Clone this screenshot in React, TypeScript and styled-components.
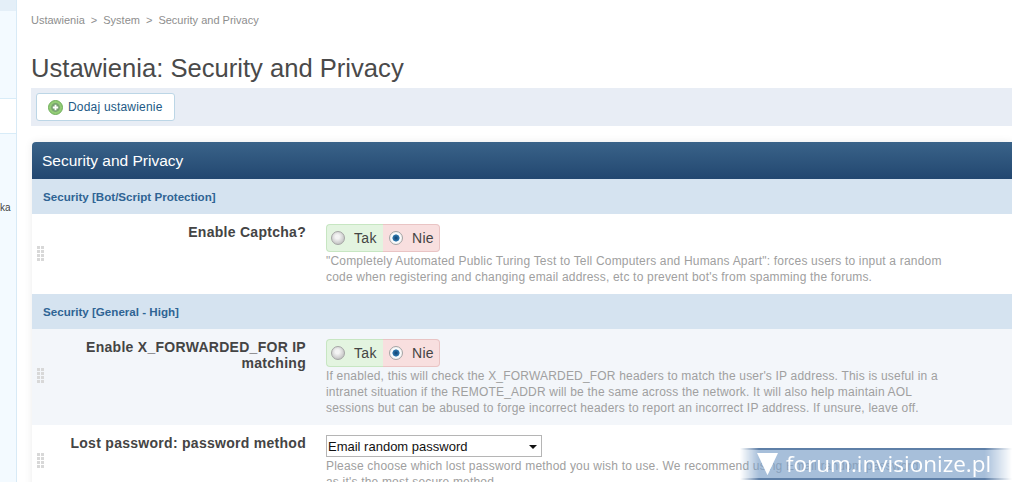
import styled, { createGlobalStyle } from "styled-components";

const GlobalStyle = createGlobalStyle`
    html, body {
        margin: 0;
        padding: 0;
        height: 482px;
        overflow: hidden;
        background: #fff;
        font-family: "Liberation Sans", Arial, sans-serif;
    }
`;

const Page = styled.div`
    display: flex;
    width: 1012px;
    height: 482px;
    overflow: hidden;
`;

const Sidebar = styled.aside`
    flex: none;
    width: 17px;
    height: 482px;
    box-sizing: border-box;
    border-right: 1px solid #d8eaf6;
    background: #f3faff;
    display: flex;
    flex-direction: column;
`;

const SideTop = styled.div`
    height: 11px;
    background: #e4eff8;
`;

const SideItem = styled.div<{ $height: number; $top: number }>`
    height: ${(p) => p.$height}px;
    margin-top: ${(p) => p.$top}px;
    background: #fff;
    border-top: 1px solid #d8ecf8;
    border-bottom: 1px solid #d8ecf8;
`;

const SideLabel = styled.div`
    margin-top: 68px;
    padding-right: 8px;
    text-align: right;
    font-size: 10px;
    line-height: 12px;
    color: #444;
    overflow: hidden;
`;

const Main = styled.main`
    flex: none;
    width: 995px;
    padding: 14px 0 0 14px;
    box-sizing: border-box;
`;

const Breadcrumb = styled.nav`
    display: flex;
    gap: 6px;
    font-size: 11px;
    line-height: 12px;
    color: #8e8e8e;
`;

const Title = styled.h1`
    margin: 27px 0 0;
    font-size: 25.6px;
    line-height: 30px;
    font-weight: 400;
    color: #4a4a4a;
    white-space: nowrap;
`;

const Toolbar = styled.div`
    margin-top: 5px;
    height: 38px;
    padding: 5px;
    box-sizing: border-box;
    background: #e8edf5;
`;

const AddButton = styled.button`
    display: flex;
    align-items: center;
    gap: 5px;
    width: 139px;
    height: 28px;
    padding: 0 0 0 11px;
    box-sizing: border-box;
    border: 1px solid #bcd6e6;
    border-radius: 3px;
    background: #fff;
    font: 12px "Liberation Sans", Arial, sans-serif;
    letter-spacing: 0.2px;
    color: #225985;
`;

const Panel = styled.section`
    margin: 16px 0 0 1px;
    box-shadow: 0 0 8px rgba(0, 0, 0, 0.08);
    border-radius: 4px 0 0 0;
`;

const PanelHeader = styled.h2`
    margin: 0;
    height: 37px;
    padding-left: 10px;
    box-sizing: border-box;
    background: linear-gradient(#3a6389, #224770);
    border-radius: 4px 0 0 0;
    font-size: 15.5px;
    line-height: 37px;
    font-weight: 400;
    color: #fff;
`;

const GroupHeader = styled.h3`
    margin: 0;
    height: 35px;
    padding-left: 11px;
    box-sizing: border-box;
    background: #d5e3f0;
    font-size: 11.6px;
    line-height: 35px;
    font-weight: 700;
    color: #2f6494;
`;

const Row = styled.div<{ $height: number; $alt?: boolean }>`
    display: grid;
    grid-template-columns: 274px 1fr;
    column-gap: 20px;
    height: ${(p) => p.$height}px;
    box-sizing: border-box;
    padding-top: 10px;
    background: ${(p) => (p.$alt ? "#f3f6fa" : "#fff")};
    position: relative;
`;

const Grip = styled.span<{ $top: number }>`
    position: absolute;
    left: 5px;
    top: ${(p) => p.$top}px;
    width: 7px;
    height: 15px;
    background: radial-gradient(circle at 1.5px 1.5px, #d8d8d8 1.5px, transparent 1.6px) 0 0 / 4px 4px;
`;

const Label = styled.div`
    text-align: right;
    font-size: 14px;
    line-height: 16px;
    font-weight: 700;
    letter-spacing: 0.28px;
    color: #444;
`;

const Value = styled.div`
    min-width: 0;
`;

const YesNo = styled.div`
    display: inline-flex;
    height: 28px;
    font-size: 14px;
    letter-spacing: 0.3px;
    color: #444;
`;

const Choice = styled.label<{ $yes?: boolean }>`
    display: flex;
    align-items: center;
    box-sizing: border-box;
    width: 57px;
    height: 28px;
    border: 1px solid ${(p) => (p.$yes ? "#c7e6c2" : "#e9c4c4")};
    border-width: ${(p) => (p.$yes ? "1px 0 1px 1px" : "1px 1px 1px 0")};
    border-radius: ${(p) => (p.$yes ? "4px 0 0 4px" : "0 4px 4px 0")};
    background: ${(p) => (p.$yes ? "#e3f4e0" : "#f8dfdf")};
    padding-left: ${(p) => (p.$yes ? "4px" : "6px")};
    gap: 9px;
`;

const Radio = styled.input`
    appearance: none;
    flex: none;
    width: 14px;
    height: 14px;
    margin: 0;
    border: 1px solid #a5a5a5;
    border-radius: 50%;
    background: radial-gradient(circle at 45% 40%, #f4f4f4 20%, #c4c4c4 75%, #e8e8e8);
    &:checked {
        background: radial-gradient(circle at 50% 50%, #10406e 0, #2e78ae 3.2px, #fff 3.9px, #e2e2e2 100%);
    }
`;

const Help = styled.p`
    margin: 1px 0 0;
    width: 616px;
    font-size: 12px;
    line-height: 16px;
    color: #a0a0a0;
    letter-spacing: 0.19px;
`;

const SelectWrap = styled.div`
    position: relative;
    width: 216px;
    height: 22px;
    margin-bottom: 1px;
    &::after {
        content: "";
        position: absolute;
        right: 5px;
        top: 10px;
        border: 4px solid transparent;
        border-top: 4px solid #111;
        border-bottom: 0;
    }
`;

const Select = styled.select`
    appearance: none;
    width: 216px;
    height: 22px;
    box-sizing: border-box;
    padding: 0 0 0 1px;
    border: 1px solid #b5b5b5;
    border-radius: 0;
    background: #fff;
    font: 13px "Liberation Sans", Arial, sans-serif;
    color: #111;
`;

const Watermark = styled.div`
    position: absolute;
    left: 740px;
    top: 448px;
    width: 272px;
    height: 32px;
    display: flex;
    align-items: center;
    gap: 8px;
    padding: 0 0 1px 17px;
    box-sizing: border-box;
    border-top: 2px solid rgba(70, 105, 150, 0.75);
    border-bottom: 2px solid rgba(70, 105, 150, 0.75);
    background: rgba(125, 160, 200, 0.68);
    -webkit-mask-image: linear-gradient(90deg, transparent, #000 7%, #000 90%, transparent);
    mask-image: linear-gradient(90deg, transparent, #000 7%, #000 90%, transparent);
    font-family: "Open Sans", sans-serif;
    font-size: 22.5px;
    color: #fff;
    white-space: nowrap;
`;

function AddIcon() {
    return (
        <svg width="15" height="15" viewBox="0 0 15 15">
            <circle cx="7.5" cy="7.5" r="7" fill="#93cc76" stroke="#6fae5a" />
            <circle cx="7.5" cy="7.5" r="4.4" fill="#78a270" />
            <path d="M7.5 4.8v5.4M4.8 7.5h5.4" stroke="#fff" strokeWidth="1.8" />
        </svg>
    );
}

function WatermarkLogo() {
    return (
        <svg width="21" height="22" viewBox="0 0 21 22">
            <path d="M0 0h21L10.5 22z" fill="#fff" />
            <path d="M10.5 22L5 10.5h11z" fill="#fff" fillOpacity="0.6" />
        </svg>
    );
}

function YesNoField({ name }: { name: string }) {
    return (
        <YesNo>
            <Choice $yes>
                <Radio type="radio" name={name} />
                Tak
            </Choice>
            <Choice>
                <Radio type="radio" name={name} defaultChecked />
                Nie
            </Choice>
        </YesNo>
    );
}

function App() {
    return (
        <Page>
            <GlobalStyle />
            <Sidebar>
                <SideTop />
                <SideItem $height={34} $top={87} />
                <SideLabel>ka</SideLabel>
            </Sidebar>
            <Main>
                <Breadcrumb>
                    <span>Ustawienia</span>
                    <span>&gt;</span>
                    <span>System</span>
                    <span>&gt;</span>
                    <span>Security and Privacy</span>
                </Breadcrumb>
                <Title>Ustawienia: Security and Privacy</Title>
                <Toolbar>
                    <AddButton>
                        <AddIcon />
                        Dodaj ustawienie
                    </AddButton>
                </Toolbar>
                <Panel>
                    <PanelHeader>Security and Privacy</PanelHeader>
                    <GroupHeader>Security [Bot/Script Protection]</GroupHeader>
                    <Row $height={80}>
                        <Grip $top={32} />
                        <Label>Enable Captcha?</Label>
                        <Value>
                            <YesNoField name="captcha" />
                            <Help>
                                "Completely Automated Public Turing Test to Tell Computers and Humans Apart": forces users to input a random code when registering and changing email address, etc to prevent bot's from spamming the forums.
                            </Help>
                        </Value>
                    </Row>
                    <GroupHeader>Security [General - High]</GroupHeader>
                    <Row $height={96} $alt>
                        <Grip $top={39} />
                        <Label>Enable X_FORWARDED_FOR IP matching</Label>
                        <Value>
                            <YesNoField name="forwarded" />
                            <Help>
                                If enabled, this will check the X_FORWARDED_FOR headers to match the user's IP address. This is useful in a intranet situation if the REMOTE_ADDR will be the same across the network. It will also help maintain AOL sessions but can be abused to forge incorrect headers to report an incorrect IP address. If unsure, leave off.
                            </Help>
                        </Value>
                    </Row>
                    <Row $height={80}>
                        <Grip $top={28} />
                        <Label>Lost password: password method</Label>
                        <Value>
                            <SelectWrap>
                                <Select defaultValue="email">
                                    <option value="email">Email random password</option>
                                </Select>
                            </SelectWrap>
                            <Help>
                                Please choose which lost password method you wish to use. We recommend using Email random password
                                <br />
                                as it's the most secure method.
                            </Help>
                        </Value>
                    </Row>
                </Panel>
            </Main>
            <Watermark>
                <WatermarkLogo />
                forum.invisionize.pl
            </Watermark>
        </Page>
    );
}

export default App;
